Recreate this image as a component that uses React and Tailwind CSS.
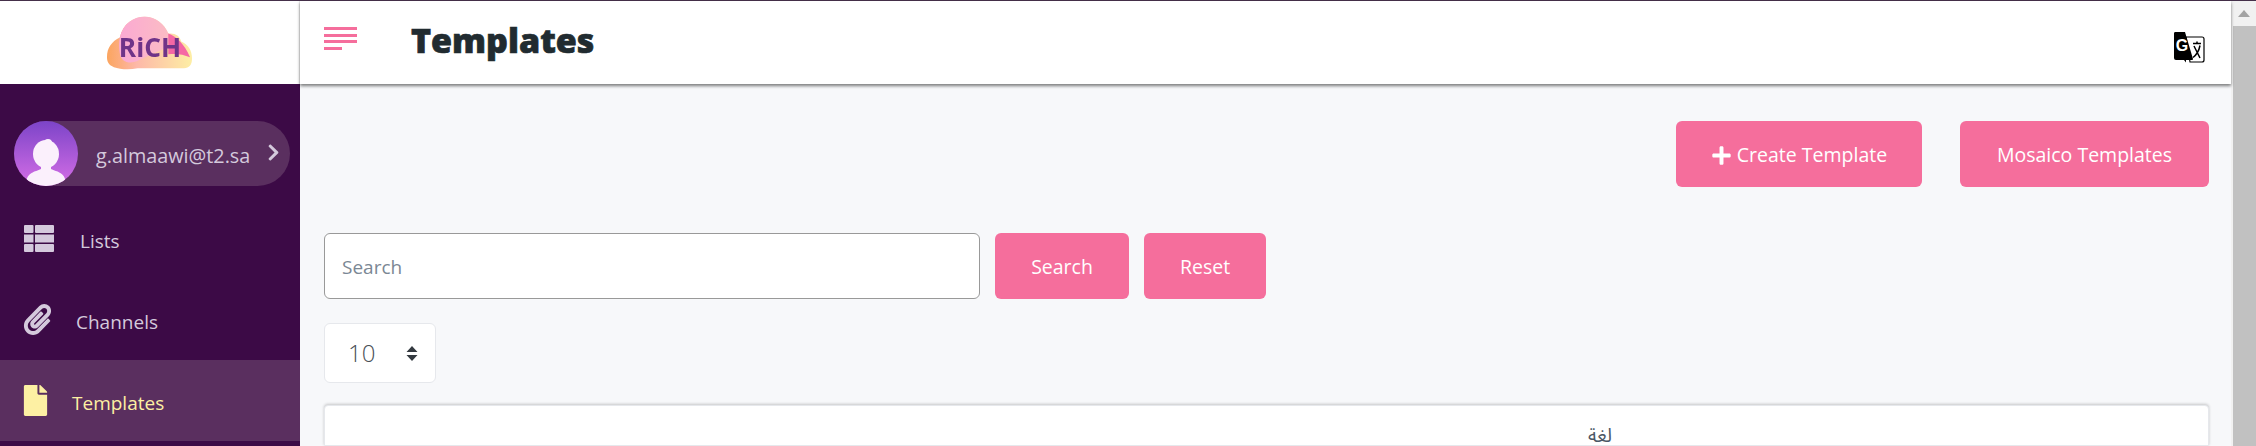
import React from "react";
import { FaPaperclip, FaFile, FaPlus, FaChevronRight } from "react-icons/fa";

const font = { fontFamily: '"Open Sans", "Noto Sans", "Noto Sans Arabic", "DejaVu Sans", sans-serif' };

function Logo() {
  return (
    <svg width="89" height="57" viewBox="2 1 90 56" aria-hidden="true" className="blur-[0.4px]">
      <defs>
        <linearGradient id="cloudA" x1="0" y1="0" x2="1" y2="0">
          <stop offset="0" stopColor="#fba9d3" />
          <stop offset="1" stopColor="#fbbcc4" />
        </linearGradient>
        <linearGradient id="cloudB" x1="0" y1="0" x2="1" y2="0">
          <stop offset="0" stopColor="#fba55f" />
          <stop offset="0.35" stopColor="#fdb8a8" />
          <stop offset="1" stopColor="#fdeea4" />
        </linearGradient>
      </defs>
      <path d="M4 44c0-10 5-16 13-20C20 10 31 3 42 3c11 0 20 7 24 17 6-1 12 2 13 8 7 3 11 9 11 17 0 7-3 10-8 10H50c-6 0-10 0-15 0-9 2-18 1-24-1-5-2-7-5-7-10z" fill="url(#cloudB)" />
      <path d="M17 24C20 10 31 3 42 3c11 0 20 7 24 17 2 6 1 10-4 15-8 4-18 8-28 13-8 3-16 0-17-8-1-6-1-11 0-16z" fill="url(#cloudA)" />
      <path d="M66 20c8 3 16 10 22 24-7-3-14-4-22-3z" fill="#f567a4" />
      <text x="47.500" y="44" textAnchor="middle" fontFamily="Open Sans, sans-serif" fontWeight="700" fontSize="27" fill="#6f3388" textLength="63" lengthAdjust="spacingAndGlyphs">RiCH</text>
    </svg>
  );
}

function Avatar() {
  return (
    <svg width="64" height="65" viewBox="0 0 64 65" aria-hidden="true" className="shrink-0">
      <defs>
        <linearGradient id="avatarBg" x1="0" y1="0" x2="0" y2="1">
          <stop offset="0" stopColor="#7c44c8" />
          <stop offset="1" stopColor="#d56ee6" />
        </linearGradient>
        <clipPath id="avatarClip"><ellipse cx="32" cy="32.500" rx="32" ry="32.500" /></clipPath>
      </defs>
      <ellipse cx="32" cy="32.500" rx="32" ry="32.500" fill="url(#avatarBg)" />
      <g clipPath="url(#avatarClip)" fill="#fbf0fc">
        <ellipse cx="32" cy="33" rx="13" ry="14" />
        <circle cx="34" cy="22" r="4" />
        <path d="M27 44h10v4c6 3 14 3 15 14v3H12v-3c1-11 9-11 15-14z" />
      </g>
    </svg>
  );
}

function TranslateIcon() {
  return (
    <svg width="32" height="32" viewBox="0 0 32 32" aria-hidden="true">
      <path d="M13 6h16a2 2 0 0 1 2 2v21a2 2 0 0 1-2 2H17L13 6z" fill="#fff" stroke="#000" strokeWidth="1.2" />
      <path d="M2.500 1H12l8 27c0 1-1 1-2 1H13v2.500l-2-2.500H3a2 2 0 0 1-2-2V2.500C1 1.500 1.500 1 2.500 1z" fill="#000" />
      <text x="9" y="20" textAnchor="middle" fontFamily="Liberation Sans, sans-serif" fontWeight="700" fontSize="16" fill="#fff">G</text>
      <path d="M20 12.500h8M24 10.500v2M21 15l6 12M27 14.500c-1 5-3 9-7 12" fill="none" stroke="#000" strokeWidth="1.500" />
    </svg>
  );
}

function ListsIcon() {
  return (
    <svg width="30" height="27" viewBox="0 0 30 27" aria-hidden="true" fill="currentColor">
      <rect x="0" y="0" width="9.500" height="8" rx="1" />
      <rect x="11" y="0" width="19" height="8" rx="1" />
      <rect x="0" y="9.500" width="9.500" height="8" />
      <rect x="11" y="9.500" width="19" height="8" />
      <rect x="0" y="19" width="9.500" height="8" rx="1" />
      <rect x="11" y="19" width="19" height="8" rx="1" />
    </svg>
  );
}

function SideItem({ icon, label, active, iconWidth }) {
  return (
    <div className={`flex h-[81px] items-center pl-6 ${active ? "bg-[#5a2f5f] text-[#fdf0a3]" : "text-[#d4c9dc]"}`}>
      <span className={`flex justify-start ${iconWidth}`}>{icon}</span>
      <span className="pt-[5px] text-[19px] leading-none">{label}</span>
    </div>
  );
}

function PinkButton({ className, children }) {
  return (
    <button className={`flex h-[66px] items-center justify-center rounded-md bg-[#f56e9c] pt-[2px] text-[19.500px] text-white ${className}`}>
      {children}
    </button>
  );
}

export default function App() {
  return (
    <div style={font} className="flex h-[446px] w-[2256px] flex-col overflow-hidden bg-[#f7f8fa]">
      <div className="h-px w-full bg-[#45304a]" />
      <div className="flex min-h-0 flex-1">
        <aside className="flex w-[300px] shrink-0 flex-col bg-[#3c0a46]">
          <div className="flex h-[83px] shrink-0 items-center justify-center border-r border-[#eeeeee] bg-white">
            <Logo />
          </div>
          <div className="flex flex-1 flex-col pt-[37px]">
            <div className="ml-[14px] mr-[10px] flex h-[65px] items-center rounded-full bg-[#5a2f5f] text-[#d4c9dc]">
              <Avatar />
              <span className="ml-[18px] pt-[4px] text-[19.800px] leading-none whitespace-nowrap">g.almaawi@t2.sa</span>
              <FaChevronRight className="ml-[14px] mb-[2px] text-[19px]" />
            </div>
            <div className="mt-[12px]">
              <SideItem icon={<ListsIcon />} label="Lists" iconWidth="w-[56px]" />
            </div>
            <SideItem icon={<FaPaperclip className="-ml-[2px] text-[31px]" />} label="Channels" iconWidth="w-[52px]" />
            <SideItem active icon={<FaFile className="-ml-[4px] text-[31px]" />} label="Templates" iconWidth="w-[48px]" />
          </div>
        </aside>

        <main className="flex min-w-0 flex-1 flex-col">
          <header className="z-10 flex h-[83px] shrink-0 items-center bg-white pl-[24px] pr-[26px] shadow-[0_2px_3px_rgba(0,0,0,0.5)]">
            <div className="mb-[8px] flex w-[33px] flex-col gap-[3.670px]">
              <span className="h-[3px] w-full bg-[#f56e9c]" />
              <span className="h-[3px] w-full bg-[#f56e9c]" />
              <span className="h-[3px] w-full bg-[#f56e9c]" />
              <span className="h-[3px] w-[18px] bg-[#f56e9c]" />
            </div>
            <h1 className="ml-[54px] mb-[5px] text-[34px] leading-none font-extrabold text-[#212b30] [-webkit-text-stroke:0.7px_#212b30]">Templates</h1>
            <div className="ml-auto mt-[8px]"><TranslateIcon /></div>
          </header>

          <div className="flex min-h-0 flex-1 flex-col pt-[37px] pl-[24px] pr-[22px]">
            <div className="flex justify-end gap-[38px]">
              <PinkButton className="w-[246px] gap-[5px]"><FaPlus className="text-[21px]" />Create Template</PinkButton>
              <PinkButton className="w-[249px]">Mosaico Templates</PinkButton>
            </div>
            <div className="mt-[46px] flex gap-[15px]">
              <input
                placeholder="Search"
                className="h-[66px] w-[656px] rounded-md border border-[#999999] bg-white px-[17px] pt-[2px] text-[19px] outline-none placeholder:text-[#7b8794]"
              />
              <PinkButton className="w-[134px]">Search</PinkButton>
              <PinkButton className="w-[122px]">Reset</PinkButton>
            </div>
            <div className="mt-[24px] flex h-[60px] w-[112px] items-center rounded-md border border-[#e6e8ec] bg-white pl-[23px] pr-[17px] text-[24px] text-[#495057]">
              <span className="font-light">10</span>
              <svg width="12" height="15" viewBox="0 0 12 15" className="ml-auto" aria-hidden="true">
                <path d="M6 0l5.500 6H.5zM6 15L.5 9h11z" fill="#343a40" />
              </svg>
            </div>
            <div className="mt-[22px] flex-1 rounded-t-[4px] border border-[#e6e8ec] bg-white shadow-[0_-1px_3px_rgba(0,0,0,0.2)]">
              <div dir="rtl" className="ml-[1256px] w-[38px] pt-[20px] text-center text-[19px] leading-none text-[#4b5766]">لغة</div>
            </div>
          </div>
        </main>

        <div className="flex w-[25px] shrink-0 flex-col bg-[#f1f1f1]">
          <div className="flex h-[25px] items-center justify-center">
            <svg width="12" height="7" viewBox="0 0 12 7" aria-hidden="true"><path d="M6 0l6 7H0z" fill="#a3a3a3" /></svg>
          </div>
          <div className="ml-[2px] flex-1 bg-[#c1c1c1]" />
        </div>
      </div>
    </div>
  );
}
